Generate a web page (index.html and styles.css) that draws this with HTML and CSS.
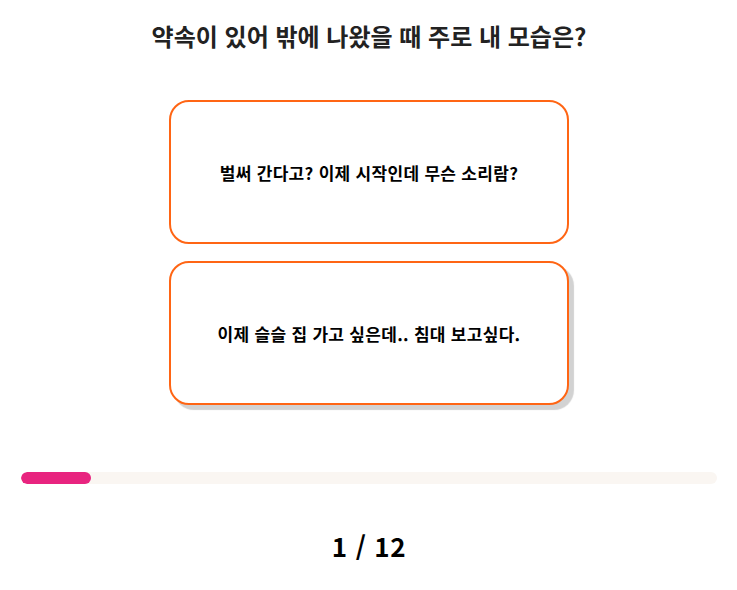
FILE: index.html
```html
<!DOCTYPE html>
<html lang="ko">
<head>
<meta charset="utf-8">
<link rel="stylesheet" href="styles.css">
</head>
<body>
<main class="quiz">
  <h1 class="question">약속이 있어 밖에 나왔을 때 주로 내 모습은?</h1>
  <div class="answers">
    <button class="answer">벌써 간다고? 이제 시작인데 무슨 소리람?</button>
    <button class="answer answer-active">이제 슬슬 집 가고 싶은데.. 침대 보고싶다.</button>
  </div>
  <div class="progress"><div class="progress-fill" style="width:10%"></div></div>
  <div class="counter">1 / 12</div>
</main>
</body>
</html>
```
FILE: styles.css
```css
* { box-sizing: border-box; }
html, body { margin: 0; padding: 0; background: #fff; }
body {
  font-family: "Noto Sans CJK KR", "Noto Sans", sans-serif;
  color: #000;
}
.quiz {
  padding: 20px 20px 0 21px;
  display: flex;
  flex-direction: column;
  align-items: center;
}
.question {
  margin: 0;
  font-size: 24px;
  font-weight: 700;
  color: #222;
  line-height: 32px;
}
.answers {
  margin-top: 48px;
  display: flex;
  flex-direction: column;
  gap: 17px;
}
.answer {
  width: 400px;
  height: 144px;
  background: #fff;
  border: 2px solid #ff6514;
  border-radius: 20px;
  font-family: inherit;
  font-size: 17px;
  letter-spacing: 0.3px;
  font-weight: 700;
  color: #000;
  cursor: pointer;
}
.answer-active {
  box-shadow: 5px 5px 1px #d2d2d2;
}
.progress {
  margin-top: 67px;
  align-self: stretch;
  height: 12px;
  border-radius: 6px;
  background: #faf6f2;
  overflow: hidden;
}
.progress-fill {
  height: 100%;
  background: #e8247f;
  border-radius: 6px;
}
.counter {
  margin-top: 46px;
  font-size: 26px;
  letter-spacing: 0.6px;
  font-weight: 700;
  line-height: 32px;
}
```
